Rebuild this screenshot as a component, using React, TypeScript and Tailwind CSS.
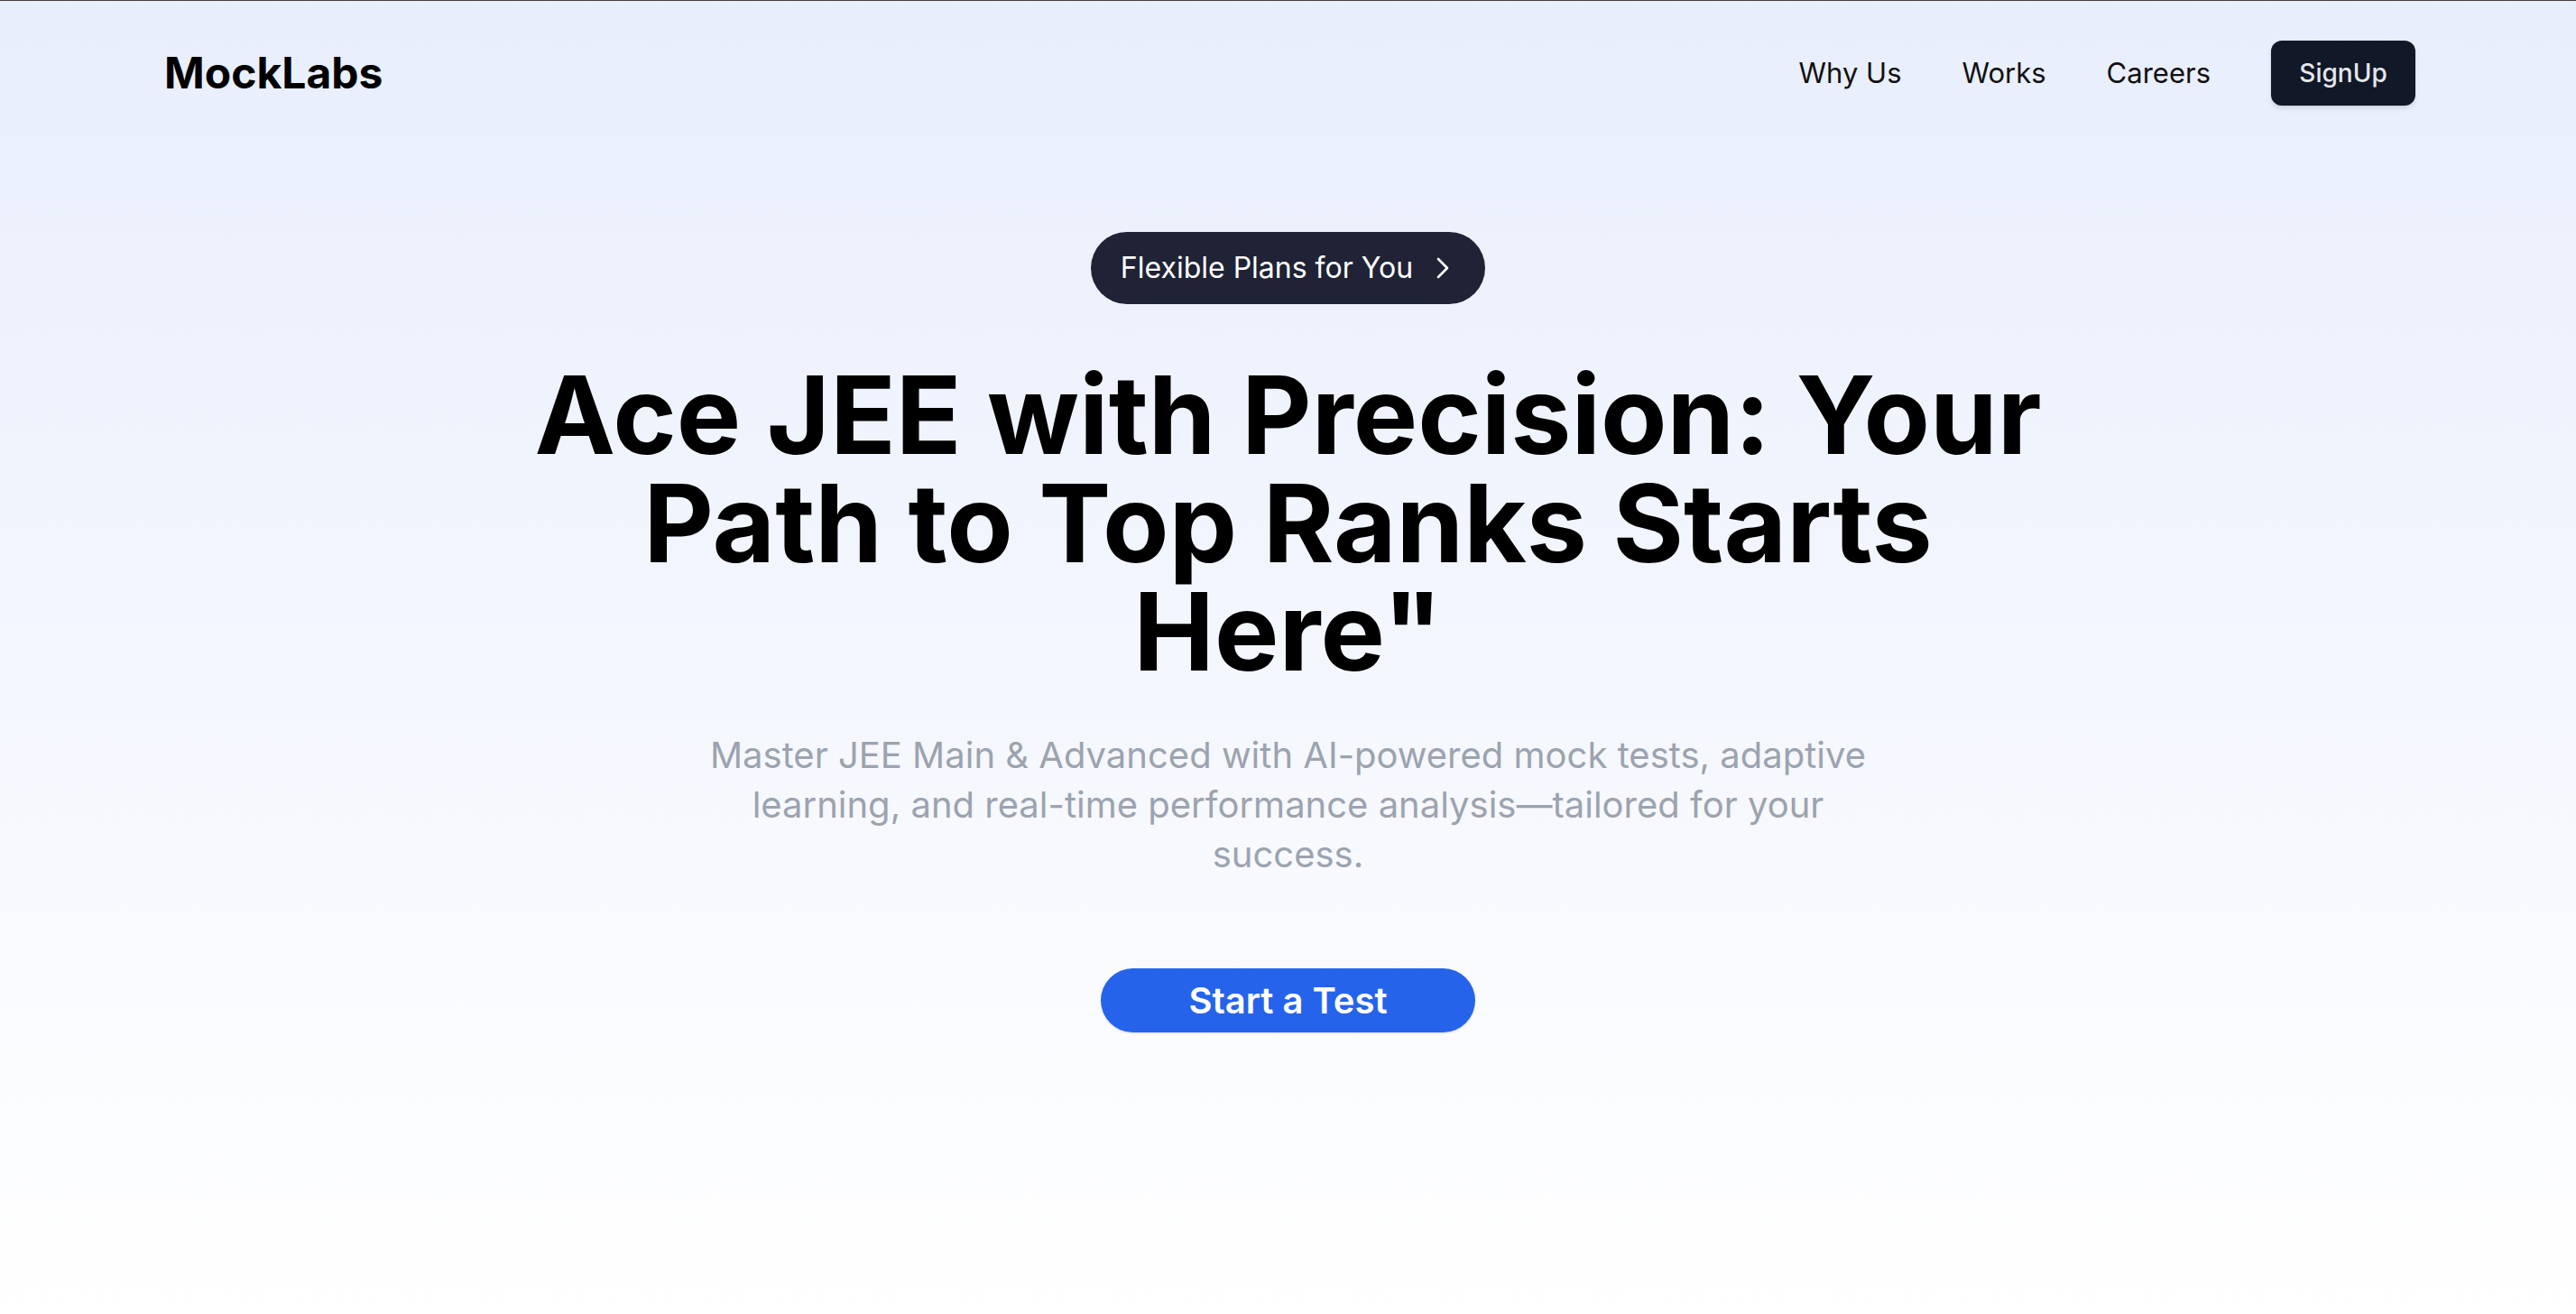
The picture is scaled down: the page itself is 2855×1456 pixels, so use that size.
import { ChevronRight } from 'lucide-react';

export default function App() {
  return (
    <div className="min-h-screen bg-gradient-to-b from-[#e8eefc] to-white border-t border-[#45403b] font-['Inter',sans-serif]">
      {/* Navbar */}
      <nav className="flex items-center justify-between pl-[182px] pr-[178px] pt-[44px]">
        <div className="text-[48px] font-bold text-black leading-none">MockLabs</div>
        <div className="flex items-center gap-[67px]">
          <a className="text-[31px] text-[#111]">Why Us</a>
          <a className="text-[31px] text-[#111]">Works</a>
          <a className="text-[31px] text-[#111]">Careers</a>
          <button className="h-[72px] w-[160px] rounded-[12px] bg-[#111827] text-[28px] font-medium text-[#e5e7eb] shadow-md">
            SignUp
          </button>
        </div>
      </nav>

      {/* Hero */}
      <main className="flex flex-col items-center mt-[140px]">
        <div className="flex items-center h-[80px] rounded-full bg-[#1f2335] pl-[33px] pr-[27px] gap-[13px] text-white">
          <span className="text-[32px]">Flexible Plans for You</span>
          <ChevronRight size={40} strokeWidth={1.6} />
        </div>

        <h1 className="mt-[63px] max-w-[1720px] text-center text-[120px] font-bold leading-none text-black">
          Ace JEE with Precision: Your Path to Top Ranks Starts Here"
        </h1>

        <p className="mt-[49px] max-w-[1300px] text-center text-[40px] leading-[55px] text-[#9ca3af]">
          Master JEE Main &amp; Advanced with AI-powered mock tests, adaptive learning, and real-time performance analysis—tailored for your success.
        </p>

        <button className="mt-[99px] h-[71px] px-[97px] rounded-full bg-[#2563eb] text-[40px] font-semibold text-white shadow-sm">
          Start a Test
        </button>
      </main>
    </div>
  );
}
